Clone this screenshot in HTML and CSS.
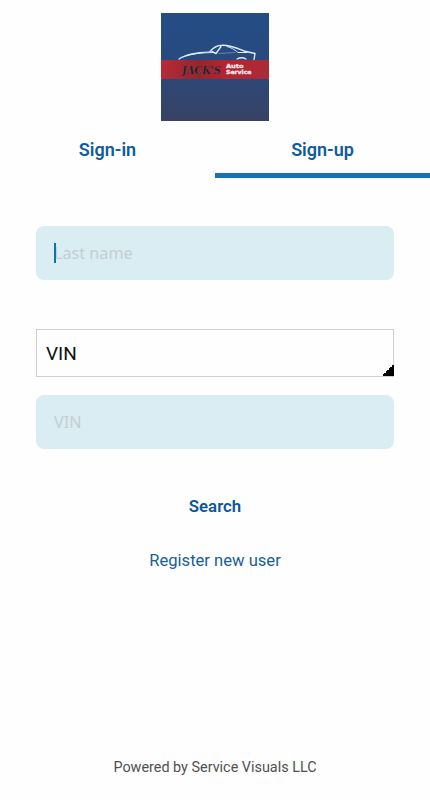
FILE: index.html
```
<!DOCTYPE html>
<html lang="en">
<head>
    <meta charset="UTF-8">
    <meta name="viewport" content="width=device-width, initial-scale=1.0">
    <title>Sign-up</title>
    <link rel="stylesheet" href="styles.css">
</head>
<body>
    <div class="container">
        <svg class="logo" viewBox="0 0 108 108">
            <defs>
                <linearGradient id="sky" x1="0" y1="0" x2="0" y2="1">
                    <stop offset="0" stop-color="#244e86"/>
                    <stop offset=".45" stop-color="#28497f"/>
                    <stop offset="1" stop-color="#384263"/>
                </linearGradient>
                <linearGradient id="band" x1="0" y1="0" x2="1" y2="0">
                    <stop offset="0" stop-color="#b52b38"/>
                    <stop offset=".35" stop-color="#96252f"/>
                    <stop offset=".6" stop-color="#b52531"/>
                    <stop offset="1" stop-color="#a92b37"/>
                </linearGradient>
            </defs>
            <rect width="108" height="108" fill="url(#sky)"/>
            <!-- car -->
            <path d="M18 46.5C22 41 38 38 50 38.5C46 40 27 41 18 46.5Z" fill="#dcebf5"/>
            <g fill="none" stroke="#dcebf5" stroke-linecap="round" stroke-linejoin="round">
                <path d="M18 46C22 42 36 39.5 52 39.5" stroke-width="1.2"/>
                <path d="M49 38.5C53 34 56 32.3 61 32.3C70 32 78 36 84 38.3L94 40.5L93 46.5" stroke-width="1.4"/>
                <path d="M51 38.5L55 40.5L60 33.5" stroke-width="1.4"/>
                <path d="M66 33.5C72 35 75 38 77 39.5L86 39.5" stroke-width="1"/>
                <path d="M58 40.5L74 39.5" stroke-width=".7" opacity=".5"/>
                <path d="M76 46C79 44.3 82 44.3 85 46" stroke-width="1.3"/>
            </g>
            <rect y="47" width="108" height="19" fill="url(#band)"/>
            <text class="logo-name" x="21" y="60.5" textLength="39" lengthAdjust="spacingAndGlyphs">JACK'S</text>
            <text class="logo-sub" x="65" y="54.8" textLength="17.5" lengthAdjust="spacingAndGlyphs">Auto</text>
            <text class="logo-sub" x="65" y="61.3" textLength="25.5" lengthAdjust="spacingAndGlyphs">Service</text>
        </svg>
        <div class="tabs">
            <a class="tab">Sign-in</a>
            <a class="tab active">Sign-up</a>
        </div>
        <form class="form">
            <div class="field"><span class="cursor"></span>Last name</div>
            <div class="select">VIN</div>
            <div class="field">VIN</div>
        </form>
        <a class="search">Search</a>
        <a class="register">Register new user</a>
        <p class="footer">Powered by Service Visuals LLC</p>
    </div>
</body>
</html>
```
FILE: styles.css
```
*{margin:0;padding:0;box-sizing:border-box;}
body{background:#fefefe;font-family:Roboto,sans-serif;}
.container{height:800px;padding-top:13px;display:flex;flex-direction:column;align-items:center;}
.logo{display:block;width:108px;height:108px;}
.logo-name{font-family:"DejaVu Serif",serif;font-size:11px;font-weight:bold;font-style:italic;fill:#241b25;stroke:#8f6670;stroke-width:.2;}
.logo-sub{font-family:"DejaVu Sans",sans-serif;font-size:5.6px;font-weight:bold;fill:#f7e9ec;stroke:#f7e9ec;stroke-width:.3;}

.tabs{display:flex;width:100%;height:57px;}
.tab{flex:1;height:57px;line-height:58px;text-align:center;font-size:18px;font-weight:600;color:#0f5c9d;}
.active{border-bottom:5px solid #1873b3;}

.form{width:100%;padding:48px 36px 0;}
.field{position:relative;height:54px;line-height:54px;padding-left:18px;border-radius:8px;background:#daedf3;font-family:"Noto Sans",sans-serif;font-size:16.2px;color:#c5ced2;}
.cursor{position:absolute;left:18px;top:17px;width:2px;height:20px;background:#0b75b0;}
.select{position:relative;height:48px;line-height:47px;margin:49px 0 18px;padding-left:9px;border:1px solid #cfcfcf;font-size:19px;color:#111;}
.select::after{content:"";position:absolute;right:-1px;bottom:0;width:12px;height:12px;background:linear-gradient(135deg,transparent 50%,#000 50%);}

.search{margin-top:46px;line-height:22px;font-size:16.8px;font-weight:600;color:#0a579c;}
.register{margin-top:32px;line-height:23px;font-size:16.6px;color:#165f98;}
.footer{margin-top:auto;margin-bottom:22px;line-height:20px;font-size:14.4px;color:#505050;}
```
